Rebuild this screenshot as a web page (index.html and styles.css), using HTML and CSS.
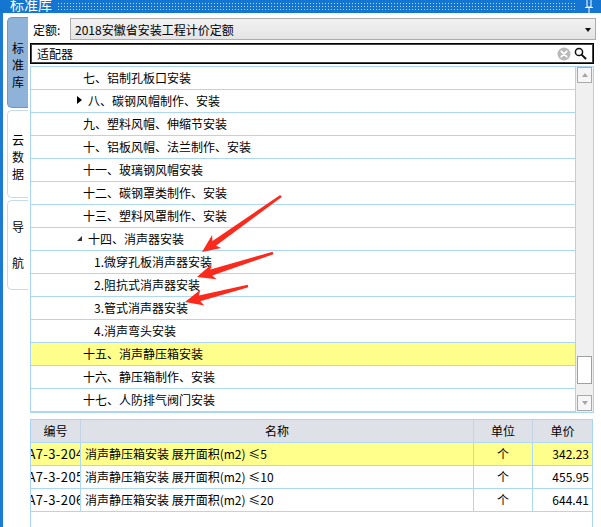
FILE: index.html
```html
<!DOCTYPE html>
<html lang="zh-CN">
<head>
<meta charset="utf-8">
<title>标准库</title>
<link rel="stylesheet" href="styles.css">
</head>
<body>
<div class="app">
  <div class="titlebar">
    <span class="title">标准库</span>
    <div class="dots"></div>
    <svg class="pin" width="10" height="13" viewBox="0 0 10 13">
      <rect x="3" y="-1" width="4" height="8" fill="none" stroke="#fff" stroke-width="1"/>
      <line x1="1" y1="7.5" x2="9" y2="7.5" stroke="#fff" stroke-width="1"/>
      <line x1="5" y1="8" x2="5" y2="13" stroke="#fff" stroke-width="1"/>
    </svg>
  </div>
  <div class="frame">
    <div class="edge"></div>
    <div class="tabs">
      <div class="tab active"><span>标</span><span>准</span><span>库</span></div>
      <div class="tab cloud"><span>云</span><span>数</span><span>据</span></div>
      <div class="tab nav"><span>导</span><span class="blank"></span><span>航</span></div>
    </div>
    <div class="main">
      <div class="quota">
        <span class="label">定额:</span>
        <div class="select"><span>2018安徽省安装工程计价定额</span><span class="caret"></span></div>
      </div>
      <div class="search">
        <span class="query">适配器</span>
        <svg class="clear" width="14" height="14" viewBox="0 0 14 14">
          <circle cx="7" cy="7" r="6.5" fill="#b9b9b9"/>
          <path d="M4.3 4.3 L9.7 9.7 M9.7 4.3 L4.3 9.7" stroke="#fff" stroke-width="1.8" stroke-linecap="round"/>
        </svg>
        <svg class="find" width="13" height="13" viewBox="0 0 13 13">
          <circle cx="5" cy="5" r="3.6" fill="none" stroke="#111" stroke-width="1.5"/>
          <path d="M7.6 7.6 L11.5 11.5" stroke="#111" stroke-width="2" stroke-linecap="round"/>
        </svg>
      </div>
      <div class="tree">
        <div class="rows">
          <div class="row">七、铝制孔板口安装</div>
          <div class="row has-tog"><span class="tog"><i class="collapsed"></i></span>八、碳钢风帽制作、安装</div>
          <div class="row">九、塑料风帽、伸缩节安装</div>
          <div class="row">十、铝板风帽、法兰制作、安装</div>
          <div class="row">十一、玻璃钢风帽安装</div>
          <div class="row">十二、碳钢罩类制作、安装</div>
          <div class="row">十三、塑料风罩制作、安装</div>
          <div class="row has-tog"><span class="tog"><i class="expanded"></i></span>十四、消声器安装</div>
          <div class="row child">1.微穿孔板消声器安装</div>
          <div class="row child">2.阻抗式消声器安装</div>
          <div class="row child">3.管式消声器安装</div>
          <div class="row child">4.消声弯头安装</div>
          <div class="row selected">十五、消声静压箱安装</div>
          <div class="row">十六、静压箱制作、安装</div>
          <div class="row">十七、人防排气阀门安装</div>
        </div>
        <div class="vscroll">
          <div class="sb-btn"><i class="up"></i></div>
          <div class="thumb"></div>
          <div class="sb-btn down"><i class="dn"></i></div>
        </div>
      </div>
      <div class="grid">
        <div class="cell head">编号</div>
        <div class="cell head">名称</div>
        <div class="cell head">单位</div>
        <div class="cell head last">单价</div>

        <div class="cell code hl"><span>A7-3-204</span></div>
        <div class="cell name hl">消声静压箱安装 展开面积(m2) ≤5</div>
        <div class="cell unit hl">个</div>
        <div class="cell price hl last">342.23</div>

        <div class="cell code"><span>A7-3-205</span></div>
        <div class="cell name">消声静压箱安装 展开面积(m2) ≤10</div>
        <div class="cell unit">个</div>
        <div class="cell price last">455.95</div>

        <div class="cell code"><span>A7-3-206</span></div>
        <div class="cell name">消声静压箱安装 展开面积(m2) ≤20</div>
        <div class="cell unit">个</div>
        <div class="cell price last">644.41</div>
      </div>
    </div>
  </div>
  <svg class="arrows" width="601" height="527" viewBox="0 0 601 527">
    <polygon fill="#fb2a1c" points="202,252 221.3,248.1 215.9,245.7 281.8,197 280.2,195 212.5,240.9 212.1,235.1"/>
    <polygon fill="#fb2a1c" points="197,277 216.6,279.2 212.2,275.4 273.4,254.2 272.6,251.8 210.4,269.6 211.8,264"/>
    <polygon fill="#fb2a1c" points="185,302 204.4,305.4 200.2,301.2 248.3,287.2 247.7,284.8 198.8,295.4 200.4,289.8"/>
  </svg>
</div>
</body>
</html>
```

FILE: styles.css
```css
* { box-sizing: border-box; }

body {
  margin: 0;
  background: #fff;
  color: #000;
  font-family: "Noto Sans CJK SC", "Noto Sans", sans-serif;
  font-size: 12px;
}

.app {
  position: relative;
  width: 601px;
  height: 527px;
  overflow: hidden;
  background: #fff;
}

/* title bar */
.titlebar {
  height: 13px;
  background: #1476d1;
  display: flex;
  align-items: flex-start;
  overflow: hidden;
}
.title {
  color: #fff;
  font-size: 14px;
  line-height: 14px;
  margin: -3px 0 0 10px;
  width: 44px;
  flex: none;
}
.dots {
  flex: none;
  width: 519px;
  height: 9px;
  margin: 2px 0 0 3px;
  background-image: radial-gradient(circle, rgba(200, 228, 252, 0.9) 0.75px, transparent 1px);
  background-size: 3px 3px;
}
.pin {
  flex: none;
  margin-left: 8px;
}

/* frame */
.frame {
  display: flex;
  height: 514px;
}
.edge {
  width: 3px;
  flex: none;
  background: #1d7bd3;
}

/* vertical tabs */
.tabs {
  width: 27px;
  flex: none;
  padding: 4px 2px 0 4px;
  display: flex;
  flex-direction: column;
  gap: 2px;
}
.tab {
  display: flex;
  flex-direction: column;
  align-items: center;
  justify-content: center;
  font-size: 12px;
  line-height: 17px;
  border: 1px solid #c6daee;
  border-right: none;
  border-radius: 5px 0 0 5px;
  background: #fff;
}
.tab span { height: 17px; }
.tab.active {
  height: 91px;
  background: #8eb2d8;
  border-color: #6f95c0;
  padding-top: 4px;
}
.tab.cloud {
  height: 88px;
  padding-top: 4px;
}
.tab.nav {
  height: 90px;
  line-height: 18px;
}
.tab.nav span { height: 18px; }

/* main column */
.main {
  width: 566px;
  flex: none;
  display: flex;
  flex-direction: column;
  padding-top: 5px;
}
.quota {
  display: flex;
  align-items: center;
  height: 22px;
}
.label {
  width: 40px;
  flex: none;
  padding-left: 3px;
  font-size: 12px;
}
.select {
  flex: 1;
  height: 22px;
  border: 1px solid #acacac;
  background: linear-gradient(#f2f2f2, #e4e4e4);
  display: flex;
  align-items: center;
  justify-content: space-between;
  padding: 0 4px 0 4px;
  font-size: 12px;
}
.caret {
  width: 0;
  height: 0;
  border-left: 3.5px solid transparent;
  border-right: 3.5px solid transparent;
  border-top: 4px solid #111;
  margin-top: 2px;
}

.search {
  margin-top: 3px;
  width: 564px;
  height: 21px;
  border: 1px solid #000;
  box-shadow: inset 0 0 0 1px #444;
  display: flex;
  align-items: center;
  padding: 0 6px 0 6px;
}
.query {
  flex: 1;
  font-size: 12px;
}
.clear { margin-right: 3px; margin-top: 1px; }
.find { margin-top: -1px; }

/* tree */
.tree {
  margin-top: 2px;
  width: 564px;
  border: 1px solid #a9d4f3;
  display: flex;
}
.rows {
  flex: 1;
  border-right: 1px solid #a9d4f3;
}
.row {
  height: 23px;
  border-bottom: 1px solid #acd7f5;
  display: flex;
  align-items: center;
  padding-left: 52px;
  padding-bottom: 2px;
  white-space: nowrap;
  font-size: 12px;
}
.row.has-tog { padding-left: 45px; }
.row.child { padding-left: 63px; }
.row.selected { background: #ffff8c; }
.tog {
  width: 12px;
  flex: none;
  display: flex;
  align-items: center;
}
.collapsed {
  width: 0;
  height: 0;
  margin-left: 1px;
  border-left: 5px solid #000;
  border-top: 4px solid transparent;
  border-bottom: 4px solid transparent;
}
.expanded {
  width: 0;
  height: 0;
  margin-left: 1px;
  margin-top: 1px;
  border-left: 5px solid transparent;
  border-bottom: 5px solid #333;
}

.vscroll {
  width: 17px;
  flex: none;
  background: #f0f0f0;
  padding: 0 1px;
  display: flex;
  flex-direction: column;
}
.sb-btn {
  height: 16px;
  border: 1px solid #a9a9a9;
  background: #f6f6f6;
  display: flex;
  align-items: center;
  justify-content: center;
}
.sb-btn.down {
  margin-top: auto;
  margin-bottom: 1px;
}
.up {
  width: 0;
  height: 0;
  border-left: 3.5px solid transparent;
  border-right: 3.5px solid transparent;
  border-bottom: 4px solid #a5a5a5;
}
.dn {
  width: 0;
  height: 0;
  border-left: 3.5px solid transparent;
  border-right: 3.5px solid transparent;
  border-top: 4px solid #a5a5a5;
}
.thumb {
  margin-top: 273px;
  height: 28px;
  border: 1px solid #a0a0a0;
  background: #fff;
}

/* grid */
.grid {
  margin-top: 6px;
  width: 563px;
  flex: 1;
  border-top: 1px solid #a9d4f3;
  border-left: 1px solid #a9d4f3;
  border-right: 1px solid #a9d4f3;
  display: grid;
  grid-template-columns: 50px 393px 59px 59px;
  grid-auto-rows: 23px;
  align-content: start;
}
.cell {
  border-right: 1px solid #acd7f5;
  border-bottom: 1px solid #acd7f5;
  display: flex;
  align-items: center;
  padding-bottom: 1px;
  white-space: nowrap;
  overflow: hidden;
  font-size: 12px;
}
.cell.last { border-right: none; }
.cell.head {
  background: #dee2e8;
  justify-content: center;
  border-color: #c4d4e6;
  border-bottom-color: #acd7f5;
}
.cell.head.last { border-right: none; }
.cell.code {
  justify-content: center;
  font-size: 13px;
}
.cell.code span {
  flex: none;
  letter-spacing: 0.4px;
}
.cell.name { padding-left: 4px; }
.cell.unit { justify-content: center; }
.cell.price {
  justify-content: flex-end;
  padding-right: 3px;
}
.cell.hl { background: #ffff8c; }

.arrows {
  position: absolute;
  left: 0;
  top: 0;
  pointer-events: none;
}
```
